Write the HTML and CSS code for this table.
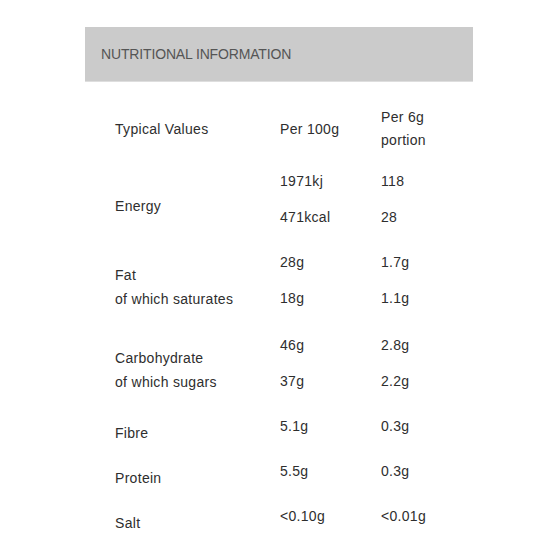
FILE: index.html
```html
<!DOCTYPE html>
<html lang="en">
<head>
    <meta charset="UTF-8">
    <meta name="viewport" content="width=device-width, initial-scale=1.0">
    <title>Nutritional Information</title>
    <link rel="stylesheet" href="styles.css">
</head>
<body>

<div class="nutrition">
    <div class="nutrition-title">NUTRITIONAL INFORMATION</div>

    <div class="facts">
        <div class="row head">
            <div class="label">Typical Values</div>
            <div class="col"><div class="val">Per 100g</div></div>
            <div class="col"><div class="val">Per 6g</div><div class="val">portion</div></div>
        </div>

        <div class="row">
            <div class="label">Energy</div>
            <div class="col"><div class="val">1971kj</div><div class="val">471kcal</div></div>
            <div class="col"><div class="val">118</div><div class="val">28</div></div>
        </div>

        <div class="row wide">
            <div class="label">Fat<br>of which saturates</div>
            <div class="col"><div class="val">28g</div><div class="val">18g</div></div>
            <div class="col"><div class="val">1.7g</div><div class="val">1.1g</div></div>
        </div>

        <div class="row">
            <div class="label">Carbohydrate<br>of which sugars</div>
            <div class="col"><div class="val">46g</div><div class="val">37g</div></div>
            <div class="col"><div class="val">2.8g</div><div class="val">2.2g</div></div>
        </div>

        <div class="row">
            <div class="label">Fibre</div>
            <div class="col"><div class="val">5.1g</div></div>
            <div class="col"><div class="val">0.3g</div></div>
        </div>

        <div class="row">
            <div class="label">Protein</div>
            <div class="col"><div class="val">5.5g</div></div>
            <div class="col"><div class="val">0.3g</div></div>
        </div>

        <div class="row">
            <div class="label">Salt</div>
            <div class="col"><div class="val">&lt;0.10g</div></div>
            <div class="col"><div class="val">&lt;0.01g</div></div>
        </div>
    </div>
</div>

</body>
</html>
```

FILE: styles.css
```css
body {
    margin: 0;
    background-color: #fff;
    font-family: 'Liberation Sans', Arial, sans-serif;
    color: #2e2e2e;
}

.nutrition {
    width: 388px;
    margin: 27px 0 0 85px;
}

.nutrition-title {
    background-color: #cbcbcb;
    border-bottom: 1px solid #dedede;
    height: 54px;
    line-height: 54px;
    padding-left: 16px;
    font-size: 14px;
    color: #555;
    letter-spacing: -0.15px;
}

.facts {
    padding: 24px 0 0 30px;
}

.row {
    display: grid;
    grid-template-columns: 165px 101px 1fr;
    align-items: center;
    margin-bottom: 9px;
    font-size: 14px;
    letter-spacing: 0.3px;
}

.row.wide {
    margin-bottom: 11px;
}

.label {
    line-height: 24px;
}

.val {
    line-height: 22px;
    padding-bottom: 14px;
}

.row.head {
    margin-bottom: 18px;
}

.row.head .val {
    line-height: 23px;
    padding-bottom: 0;
}
```
